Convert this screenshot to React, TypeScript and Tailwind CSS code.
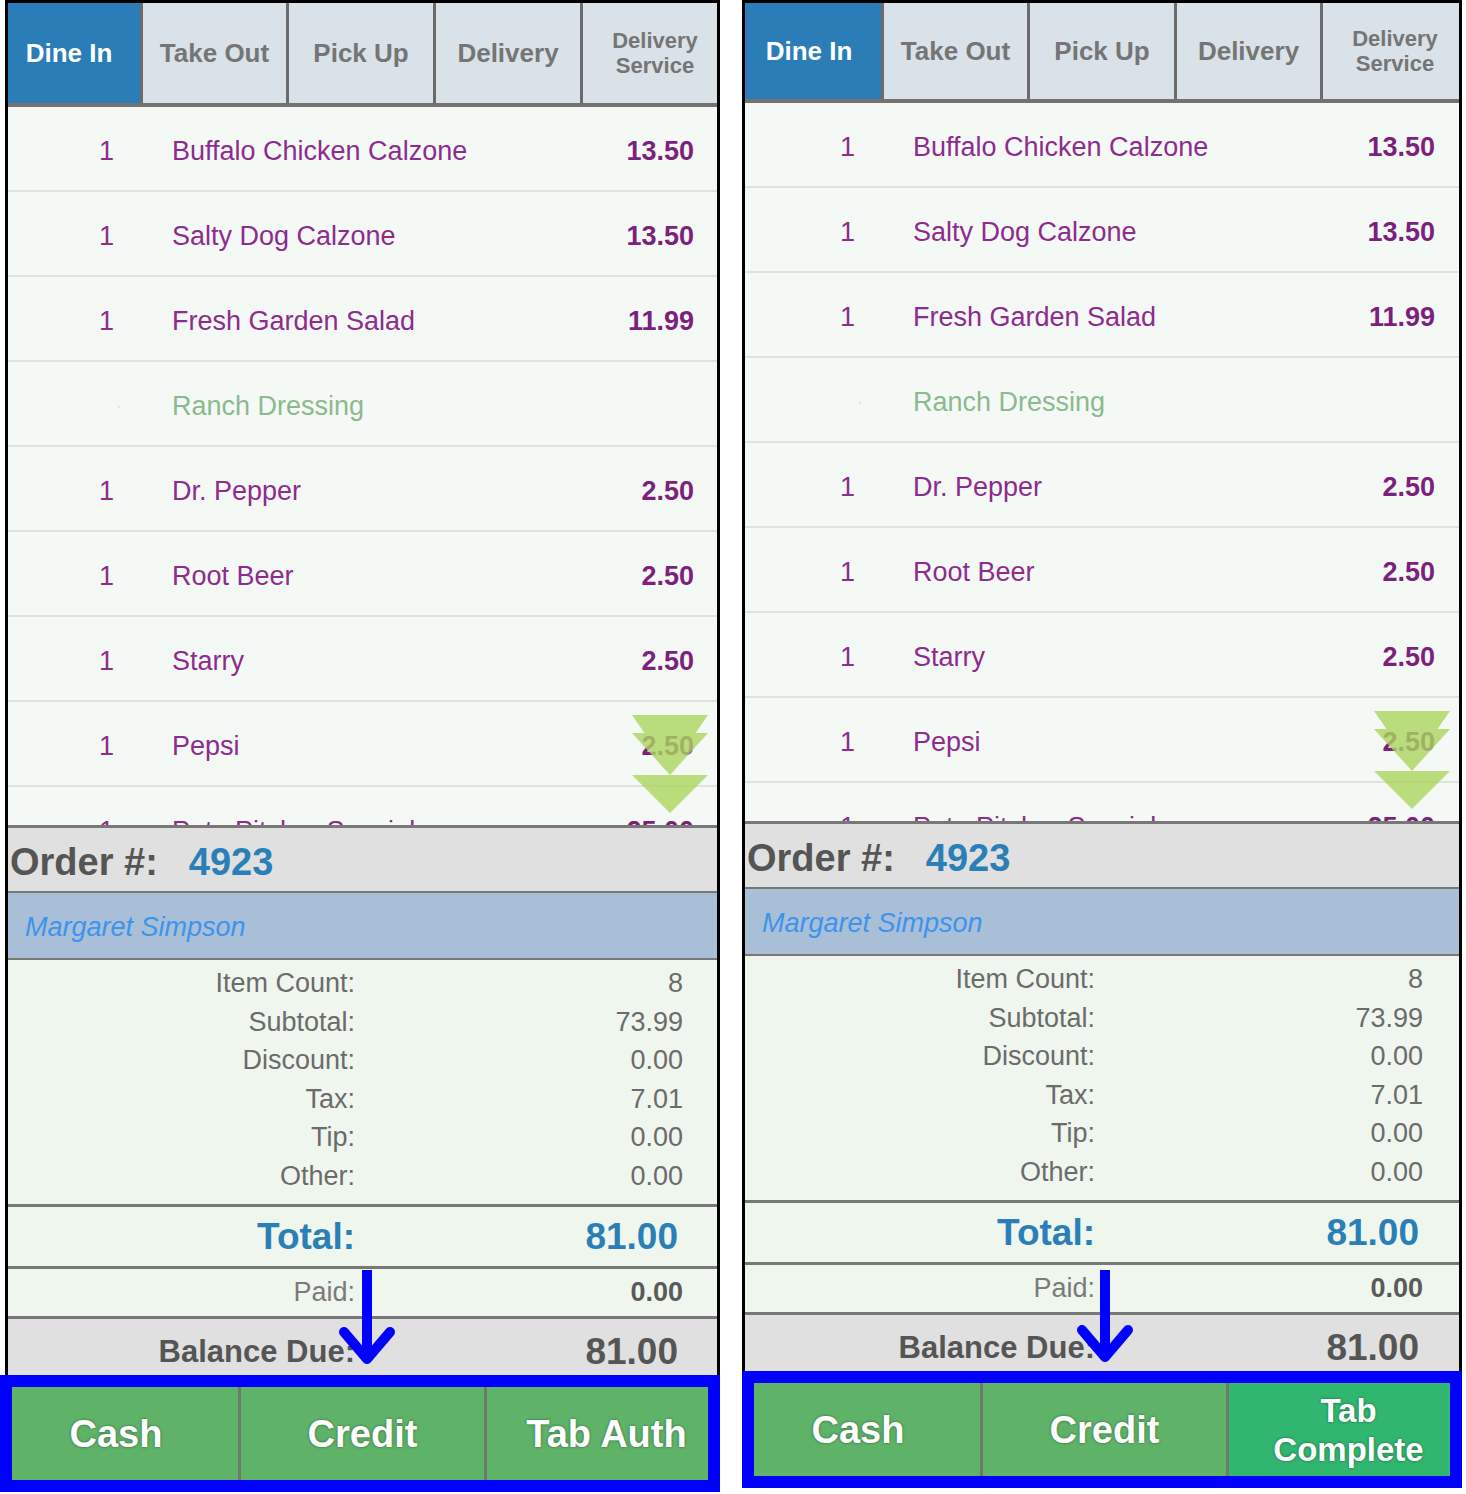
import React from "react";

type Item = { qty: string; name: string; price: string; modifier?: boolean };

const items: Item[] = [
  { qty: "1", name: "Buffalo Chicken Calzone", price: "13.50" },
  { qty: "1", name: "Salty Dog Calzone", price: "13.50" },
  { qty: "1", name: "Fresh Garden Salad", price: "11.99" },
  { qty: "", name: "Ranch Dressing", price: "", modifier: true },
  { qty: "1", name: "Dr. Pepper", price: "2.50" },
  { qty: "1", name: "Root Beer", price: "2.50" },
  { qty: "1", name: "Starry", price: "2.50" },
  { qty: "1", name: "Pepsi", price: "2.50" },
  { qty: "1", name: "Pete Pitcher Special", price: "25.00" },
];

const totals = [
  ["Item Count:", "8"],
  ["Subtotal:", "73.99"],
  ["Discount:", "0.00"],
  ["Tax:", "7.01"],
  ["Tip:", "0.00"],
  ["Other:", "0.00"],
];

type PanelConfig = {
  colClass: string;
  boxClass: string;
  tabsClass: string;
  tabWidths: string[];
  firstTabPad: string;
  lastTabPad: string;
  qtyClass: string;
  priceClass: string;
  labelClass: string;
  valueClass: string;
  bigValueClass: string;
  arrowX: number;
  arrowTop: number;
  arrowTip: number;
  complete: boolean;
};

const tabs = ["Dine In", "Take Out", "Pick Up", "Delivery"];

function ScrollArrows() {
  return (
    <svg
      className="absolute right-[9px] top-[608px] w-[76px] h-[98px] pointer-events-none"
      viewBox="0 0 76 98"
    >
      <g fill="#abd65e" opacity="0.8">
        <polygon points="0,0 76,0 38,55" />
        <polygon points="0,18 76,18 38,60" />
        <polygon points="0,60 76,60 38,98" />
      </g>
    </svg>
  );
}

function OrderPanel({ cfg }: { cfg: PanelConfig }) {
  return (
    <div className={`relative shrink-0 ${cfg.colClass}`}>
      <div
        className={`flex flex-col border-t-[3px] border-x-[3px] border-black bg-[#f5f9f6] ${cfg.boxClass}`}
      >
        {/* Order type tabs */}
        <div className={`flex shrink-0 border-b-4 border-[#727272] leading-none ${cfg.tabsClass}`}>
          {tabs.map((t, i) => (
            <div
              key={t}
              className={`${cfg.tabWidths[i]} flex items-center justify-center font-bold text-[26px] ${
                i === 0
                  ? `bg-[#2a7db6] text-white ${cfg.firstTabPad}`
                  : "bg-[#d8e2e8] text-[#757575] border-l-[3px] border-[#6b6b6b]"
              }`}
            >
              {t}
            </div>
          ))}
          <div
            className={`flex-1 flex items-center justify-center text-center bg-[#d8e2e8] text-[#757575] border-l-[3px] border-[#6b6b6b] font-bold text-[22px] leading-[25px] ${cfg.lastTabPad}`}
          >
            Delivery
            <br />
            Service
          </div>
        </div>

        {/* Item list */}
        <div className="relative h-[718px] shrink-0 overflow-hidden">
          {items.map((it, i) => (
            <div
              key={i}
              className="flex items-center h-[85px] border-b-2 border-[#dfe3df] pt-[5px] text-[27px] leading-none"
            >
              <div className={`${cfg.qtyClass} text-right text-[#8e2b8e]`}>
                {it.modifier ? (
                  <span className="inline-block w-[2px] h-[2px] mr-[-6px] bg-[#e2e6e2] align-middle" />
                ) : (
                  it.qty
                )}
              </div>
              <div
                className={`flex-1 pl-[58px] ${
                  it.modifier ? "text-[#8cb98e]" : "text-[#8e2b8e]"
                }`}
              >
                {it.name}
              </div>
              <div className={`font-bold text-[#7d1f7d] ${cfg.priceClass}`}>
                {it.price}
              </div>
            </div>
          ))}
          <ScrollArrows />
        </div>

        {/* Order number */}
        <div className="flex items-center h-[68px] shrink-0 bg-[#e0e0e0] border-t-[3px] border-b-2 border-[#787878] pl-[2px] pt-[5px] font-bold text-[38px] leading-none">
          <span className="text-[#555555]">Order #:</span>
          <span className="ml-[31px] text-[#2a80b6]">4923</span>
        </div>

        {/* Customer */}
        <div className="flex items-center h-[67px] shrink-0 bg-[#a9bfd8] border-b-2 border-[#787878] pl-[17px] pt-[4px] italic text-[27px] leading-none text-[#3e93ec]">
          Margaret Simpson
        </div>

        {/* Totals */}
        <div className="h-[244px] shrink-0 bg-[#eff6ee] pt-[4px] text-[27px] leading-[38.5px] text-[#6b6b6b]">
          {totals.map(([label, value]) => (
            <div key={label} className="flex">
              <div className={`${cfg.labelClass} text-right`}>{label}</div>
              <div className={`flex-1 text-right ${cfg.valueClass}`}>{value}</div>
            </div>
          ))}
        </div>

        <div className="flex items-center h-[62px] shrink-0 bg-[#eff6ee] border-t-[3px] border-[#787878] font-bold text-[37px] leading-none text-[#2a80b6]">
          <div className={`${cfg.labelClass} text-right`}>Total:</div>
          <div className={`flex-1 text-right ${cfg.bigValueClass}`}>81.00</div>
        </div>

        <div className="flex items-center h-[50px] shrink-0 bg-[#eff6ee] border-t-[3px] border-[#787878] text-[27px] leading-none">
          <div className={`${cfg.labelClass} text-right text-[#7a7a7a]`}>Paid:</div>
          <div className={`flex-1 text-right font-bold text-[#5a5a5a] ${cfg.valueClass}`}>
            0.00
          </div>
        </div>

        <div className="flex items-center flex-1 min-h-0 bg-[#e0e0e0] border-t-[3px] border-[#787878] pt-[8px] font-bold leading-none text-[#555555]">
          <div className={`${cfg.labelClass} text-right text-[31px]`}>Balance Due:</div>
          <div className={`flex-1 text-right text-[37px] ${cfg.bigValueClass}`}>81.00</div>
        </div>
      </div>

      {/* Payment buttons */}
      <div className="h-[117px] border-[12px] border-[#0000ff] flex text-white font-bold text-[38px] leading-none [text-shadow:0_0_3px_rgba(0,0,0,0.45)]">
        <div className="w-[226px] bg-[#5eb369] flex items-center justify-center pr-[18px]">
          Cash
        </div>
        <div className="w-[246px] bg-[#5eb369] border-l-[3px] border-[#6f7a6f] flex items-center justify-center">
          Credit
        </div>
        {cfg.complete ? (
          <div className="flex-1 bg-[#31b66f] border-l-[3px] border-[#6f7a6f] flex items-center justify-center text-center pl-[18px] text-[33px] leading-[39px]">
            Tab
            <br />
            Complete
          </div>
        ) : (
          <div className="flex-1 bg-[#5eb369] border-l-[3px] border-[#6f7a6f] flex items-center justify-center pl-[18px]">
            Tab Auth
          </div>
        )}
      </div>

      {/* Pointer arrow */}
      <svg
        className="absolute left-0 top-0 w-[720px] h-[1494px] pointer-events-none"
        viewBox="0 0 720 1494"
      >
        <line
          x1={cfg.arrowX}
          y1={cfg.arrowTop}
          x2={cfg.arrowX}
          y2={cfg.arrowTip - 6}
          stroke="#0000ff"
          strokeWidth="10"
        />
        <polyline
          points={`${cfg.arrowX - 23},${cfg.arrowTip - 27} ${cfg.arrowX},${cfg.arrowTip} ${cfg.arrowX + 23},${cfg.arrowTip - 27}`}
          fill="none"
          stroke="#0000ff"
          strokeWidth="10"
          strokeLinecap="round"
          strokeLinejoin="round"
        />
      </svg>
    </div>
  );
}

const leftPanel: PanelConfig = {
  colClass: "w-[720px]",
  boxClass: "ml-[5px] w-[715px] h-[1375px]",
  tabsClass: "h-[104px]",
  tabWidths: ["w-[132px]", "w-[146px]", "w-[147px]", "w-[147px]"],
  firstTabPad: "pr-[10px]",
  lastTabPad: "pl-[10px]",
  qtyClass: "w-[106px]",
  priceClass: "pr-[23px]",
  labelClass: "w-[347px]",
  valueClass: "pr-[34px]",
  bigValueClass: "pr-[39px]",
  arrowX: 367,
  arrowTop: 1270,
  arrowTip: 1359,
  complete: false,
};

const rightPanel: PanelConfig = {
  colClass: "w-[720px] ml-[22px]",
  boxClass: "w-[720px] h-[1371px]",
  tabsClass: "h-[100px]",
  tabWidths: ["w-[136px]", "w-[146px]", "w-[147px]", "w-[146px]"],
  firstTabPad: "pr-[8px]",
  lastTabPad: "pl-[8px]",
  qtyClass: "w-[110px]",
  priceClass: "pr-[24px]",
  labelClass: "w-[350px]",
  valueClass: "pr-[36px]",
  bigValueClass: "pr-[40px]",
  arrowX: 363,
  arrowTop: 1270,
  arrowTip: 1357,
  complete: true,
};

export default function App() {
  return (
    <div className="w-[1466px] h-[1494px] bg-white flex font-['Liberation_Sans',Arial,sans-serif] overflow-hidden">
      <OrderPanel cfg={leftPanel} />
      <OrderPanel cfg={rightPanel} />
    </div>
  );
}
